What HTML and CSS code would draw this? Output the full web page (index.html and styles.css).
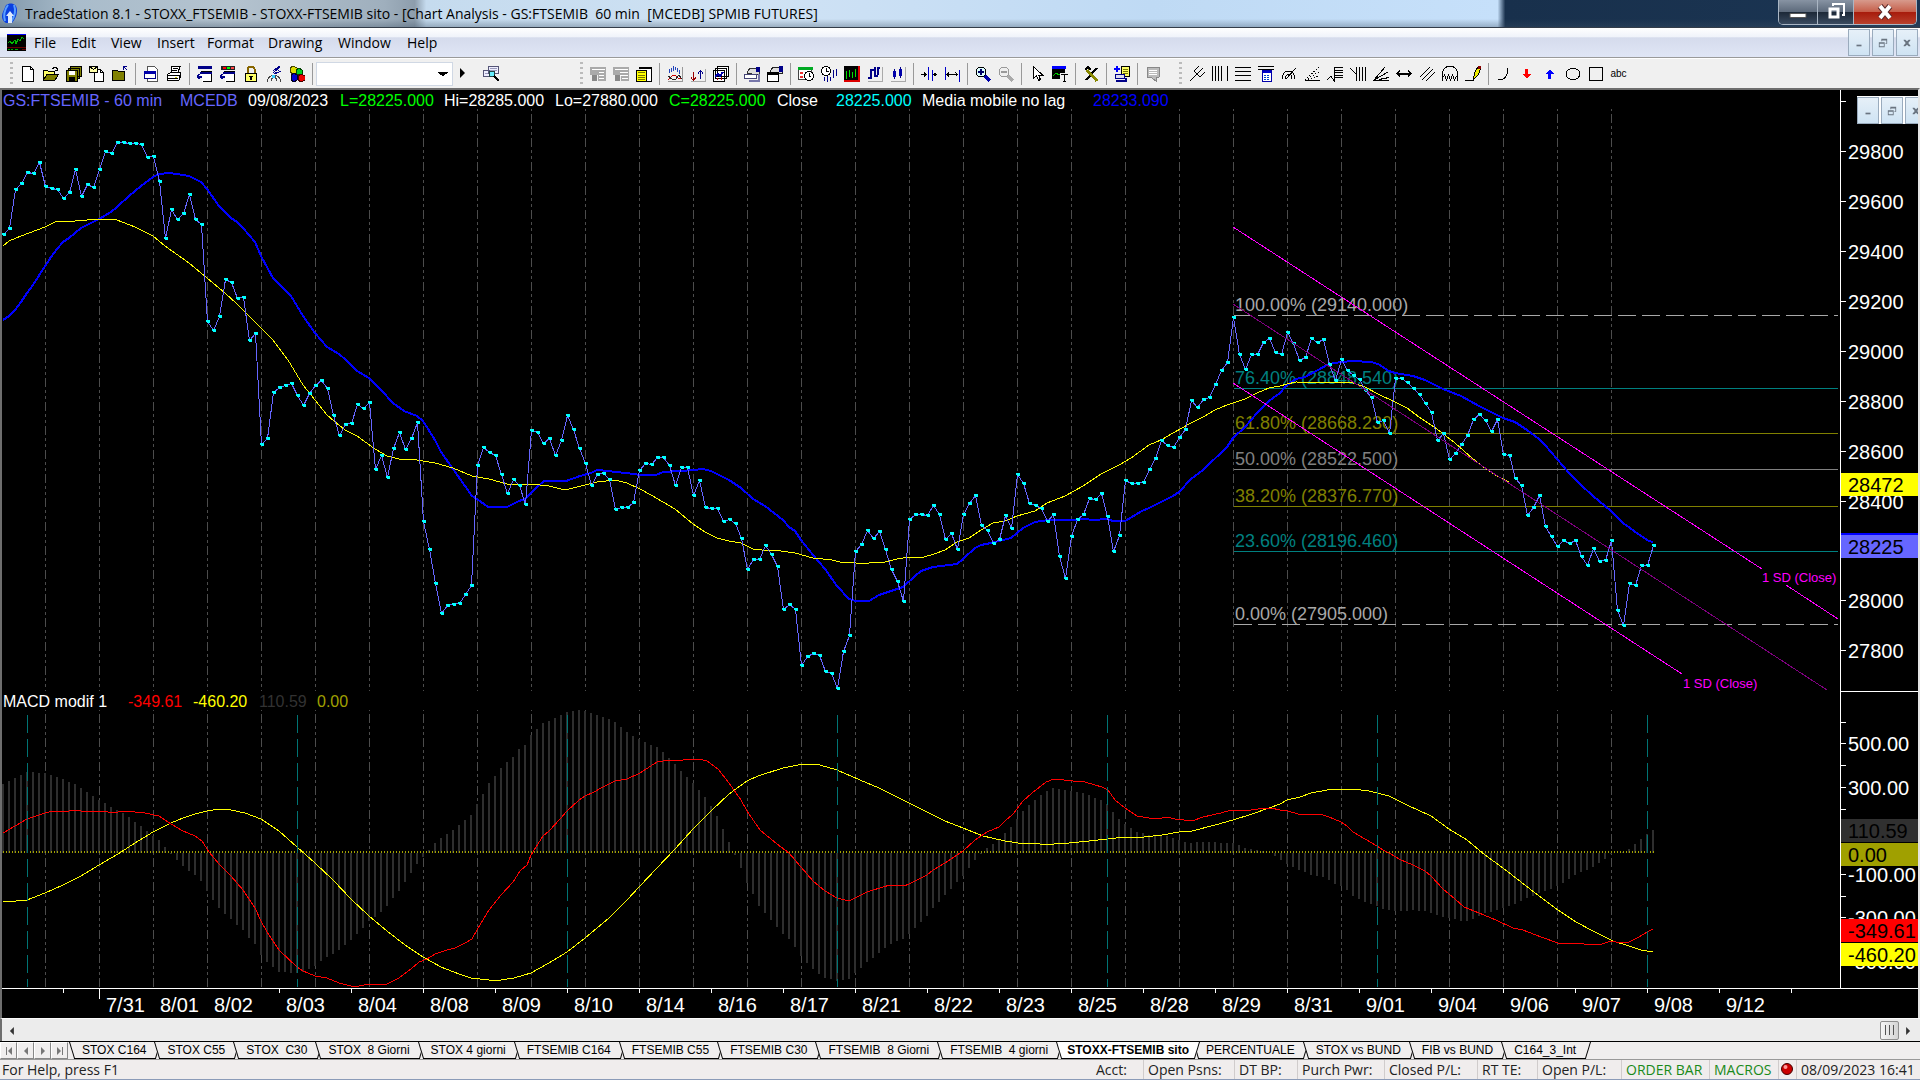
FILE: index.html
```html
<!DOCTYPE html>
<html lang="en">
<head>
<meta charset="utf-8">
<title>TradeStation 8.1 - STOXX_FTSEMIB</title>
<link rel="stylesheet" href="styles.css">
</head>
<body>
<div class="app">
  <header class="titlebar">
    <svg class="logo" viewBox="0 0 18 24"><path d="M5 3C9 0 16 1 16 8c0 6-2 9-5 13H5C1 19 0 14 2 10z" fill="#0a3fe0"/><path d="M7 3c-3 4-5 9-3 16M13 3c2 5 1 11-3 17" stroke="#5aa0ff" stroke-width="2" fill="none"/><path d="M9 9l4 5h-2v7H7v-7H5z" fill="#dbe9ff"/></svg>
    <h1 class="title">TradeStation 8.1 - STOXX_FTSEMIB - STOXX-FTSEMIB sito - [Chart Analysis - GS:FTSEMIB&nbsp; 60 min&nbsp; [MCEDB] SPMIB FUTURES]</h1>
    <div class="wincontrols">
      <button class="win win-min" aria-label="Minimize"><svg width="20" height="20" viewBox="0 0 20 20"><path d="M2 11.500h16v4H2z" fill="#fff" stroke="#555"/></svg></button>
      <button class="win win-max" aria-label="Restore"><svg width="20" height="20" viewBox="0 0 20 20"><path d="M7 4V2h11v11h-2" fill="none" stroke="#fff" stroke-width="2"/><path d="M4 7h8v8H4z" fill="none" stroke="#fff" stroke-width="3"/></svg></button>
      <button class="win win-close" aria-label="Close"><svg width="20" height="20" viewBox="0 0 20 20"><path d="M5 4l10 12M15 4L5 16" stroke="#5a2a2a" stroke-width="6"/><path d="M5 4l10 12M15 4L5 16" stroke="#fff" stroke-width="4"/></svg></button>
    </div>
  </header>

  <nav class="menubar">
    <svg class="docicon" viewBox="0 0 19 17" shape-rendering="crispEdges"><path d="M0 0h19v17H0z" fill="#000"/><path d="M0 0h19v1H0z" fill="#00f"/><path d="M1 9l2-2 2 3 3-4 1 4 2-5 2 2 2-4 2 2" stroke="#0b0" fill="none"/><path d="M0 13.500h19M15 15h4" stroke="#600"/><path d="M1 15.500h2m1 0h2m2 0h3" stroke="#0a0"/></svg>
    <button class="menu m-file">File</button><button class="menu m-edit">Edit</button><button class="menu m-view">View</button><button class="menu m-insert">Insert</button><button class="menu m-format">Format</button><button class="menu m-drawing">Drawing</button><button class="menu m-window">Window</button><button class="menu">Help</button>
    <div class="mdi">
      <button class="mdibtn" aria-label="Minimize chart"><svg viewBox="0 0 12 12"><path d="M3 8h6v2H3z"/></svg></button>
      <button class="mdibtn" aria-label="Restore chart"><svg viewBox="0 0 12 12"><path d="M4 1h7v6H9V6h1V3H5v1H4zM1 5h7v6H1zm1 2v3h5V7z"/></svg></button>
      <button class="mdibtn" aria-label="Close chart"><svg viewBox="0 0 12 12"><path d="M2 2h2l2 2 2-2h2v1L7.500 6 10 9v1H8L6 8l-2 2H2V9l2.500-3L2 3z"/></svg></button>
    </div>
  </nav>

  <div class="toolbar">
    <div class="tools">
      <span class="grip"></span>
      <button class="tool" aria-label="New"><svg viewBox="0 0 16 16"><path d="M2.500.5h8l3 3v12h-11z" fill="#fff" stroke="#000"/><path d="M10.500.5v3h3" fill="none" stroke="#000"/></svg></button>
      <button class="tool" aria-label="Open"><svg viewBox="0 0 16 16"><path d="M.5 13.500v-9h4l1 1h6v3" fill="#ff6" stroke="#000"/><path d="M.5 14l3.500-5.500h11.500L12 14z" fill="#808000" stroke="#000"/><path d="M9.500 3.500l1-2h3l1 2m0-2v3h-3" fill="none" stroke="#000"/></svg></button>
      <button class="tool" aria-label="Save all"><svg viewBox="0 0 16 16"><path d="M4.500.5h11v10h-11zM2.500 2.500h11v10h-11z" fill="#808000" stroke="#000"/><path d="M.5 4.500h11v11H.5z" fill="#808000" stroke="#000"/><path d="M3 5h6v4H3z" fill="#fff"/><path d="M3 11h6v4H3z" fill="#000"/></svg></button>
      <button class="tool" aria-label="New from mail"><svg viewBox="0 0 16 16"><path d="M5.500 3.500h6l3 3v9h-9z" fill="#fff" stroke="#000"/><path d="M.5.5h8v6h-8z" fill="#ffa" stroke="#000"/><path d="M.5.5l4 3 4-3M11.500 3.500v3h3" fill="none" stroke="#000"/></svg></button>
      <button class="tool" aria-label="Close folder"><svg viewBox="0 0 16 16"><path d="M.5 14.500v-10h5l1 1h6v9z" fill="#808000" stroke="#000"/><path d="M11.500 4V.5h3M12 1l3.500 3.500" fill="none" stroke="#008"/></svg></button>
      <span class="sep"></span>
      <button class="tool" aria-label="Page window"><svg viewBox="0 0 16 16"><path d="M4.500.5h7l3 3v12h-10z" fill="#fff" stroke="#555"/><path d="M1.500 5.500h11v7h-11z" fill="#fff" stroke="#008"/><path d="M1 5h12v3H1z" fill="#00a"/></svg></button>
      <button class="tool" aria-label="Print"><svg viewBox="0 0 16 16"><path d="M5 6.500l1-6h8l-2 6M1.500 8.500l3-2h10v5l-2 3h-11z" fill="#fff" stroke="#000"/><path d="M1 9.500h12M7 2.500h5M6 4.500h5M2 12.500h10M13 9v5" stroke="#000"/><path d="M9 11h2v1H9z" fill="#cc0"/></svg></button>
      <span class="sep"></span>
      <button class="tool" aria-label="Previous window"><svg viewBox="0 0 16 16"><path d="M1 0h14v3H1z" fill="#008"/><path d="M3.500 5.500h11v10h-9" fill="#fff" stroke="#000"/><path d="M3 6.500h12" stroke="#008" stroke-width="2"/><path d="M0 10.500h5M2.500 8L0 10.500 2.500 13" fill="none" stroke="#008" stroke-width="2"/></svg></button>
      <button class="tool" aria-label="Next window"><svg viewBox="0 0 16 16"><path d="M1 0h14v4H1z" fill="#222"/><path d="M3 1h3v2H3z" fill="#f00"/><path d="M7 1h3v2H7z" fill="#0f0"/><path d="M11 1h3v2h-3z" fill="#f44"/><path d="M3.500 5.500h11v10h-9" fill="#fff" stroke="#000"/><path d="M3 6.500h12" stroke="#008" stroke-width="2"/><path d="M0 10.500h5M2.500 8L0 10.500 2.500 13" fill="none" stroke="#008" stroke-width="2"/></svg></button>
      <button class="tool" aria-label="Lock"><svg viewBox="0 0 16 16"><path d="M4.500 7V3l2-2.500h3l2 2.500v4" fill="none" stroke="#886600" stroke-width="2"/><path d="M2.500 7.500h11v8h-11z" fill="#ff6" stroke="#000"/><path d="M6 10h4v1H9v3H7v-3H6z" fill="#000"/></svg></button>
      <button class="tool" aria-label="Satellite"><svg viewBox="0 0 16 16"><path d="M7 7l7-6M8 4l6-4M8 8l7-3M7 4l4 4M10 2l4 4" stroke="#008" fill="none"/><path d="M1 15.500c1-4 3-6 7-6s6 2 7 6M5 15l2-5M11 15L9 10" fill="none" stroke="#444"/><path d="M6 9h3v3H6z" fill="#3cf"/></svg></button>
      <button class="tool" aria-label="Cubes"><svg viewBox="0 0 16 16"><path d="M1 2l3-2 4 2v5L4 8 1 6z" fill="#dd0" stroke="#440"/><path d="M7 4l3-2 3 2v4l-3 1-3-1z" fill="#0c2" stroke="#040"/><path d="M2 9l3-2 3 2v5l-3 2-3-2z" fill="#00c" stroke="#002"/><path d="M9 10l3-2 4 2v4l-4 2-3-2z" fill="#e00" stroke="#400"/></svg></button>
      <span class="sep"></span>
      <select class="symbol" aria-label="Symbol"><option></option></select>
      <button class="go" aria-label="Go"><svg viewBox="0 0 6 12"><path d="M1 1l5 5-5 5z"/></svg></button>
      <button class="tool find" aria-label="Find symbol"><svg viewBox="0 0 16 16"><path d="M.5 4.500h6v6h-6zM5.500.5h10v7h-10z" fill="#eef" stroke="#557"/><path d="M7 2.500h7M7 4.500h7M2 7.500h3" stroke="#99b"/><circle cx="9" cy="8" r="3" fill="#6ef" stroke="#244"/><path d="M11 10l5 5" stroke="#000" stroke-width="2"/></svg></button>
    </div>

    <div class="tools tools-chart">
      <span class="grip"></span>
      <button class="tool" aria-label="Account"><svg viewBox="0 0 16 16"><path d="M0 1h16v14h-8V9H0z" fill="#aaa"/><path d="M2 3.500h13M9 6.500h5M9 9.500h5M9 12.500h5" stroke="#fff"/><path d="M2 9h5v6H2z" fill="#888"/></svg></button>
      <button class="tool" aria-label="Positions"><svg viewBox="0 0 16 16"><path d="M0 1h16v14H8V9H0z" fill="#aaa"/><path d="M2 3.500h13M7 6.500h8M7 9.500h8M9 12.500h6" stroke="#fff"/><path d="M2 9h5v6H2z" fill="#888"/></svg></button>
      <button class="tool" aria-label="Data table"><svg viewBox="0 0 16 16"><path d="M3.500 1.500h12v14h-5" fill="#fff" stroke="#000"/><path d="M3 1h13v2H3z"/><path d="M.5 4.500h10v11H.5z" fill="#ff0" stroke="#000"/><path d="M2 6.500h7M2 9h7M2 11.500h7M2 13.500h7" stroke="#770"/></svg></button>
      <span class="sep"></span>
      <button class="tool" aria-label="Indicator"><svg viewBox="0 0 16 16"><path d="M2.500 3v4M4.500 2v4M6.500 0v5M8.500 1v3M10.500 2v4M12.500 4v4" stroke="#24b"/><path d="M1 14l4-4 3-1 3 3 3 1" fill="none" stroke="#c00"/><path d="M1 10l4 3h4l3-4 3 4" fill="none" stroke="#222"/><path d="M15.500 1v14.500H1" fill="none" stroke="#999"/></svg></button>
      <button class="tool" aria-label="Signals"><svg viewBox="0 0 16 16"><path d="M3.500 6v8M1 11.500l2.500 3 2.500-3" fill="none" stroke="#900"/><path d="M10.500 13V5M8 7.500l2.500-3 2.500 3" fill="none" stroke="#008"/><path d="M15.500 3v12.500H1" fill="none" stroke="#aaa"/></svg></button>
      <button class="tool" aria-label="Charts"><svg viewBox="0 0 16 16"><path d="M4.500.5h11v10h-11zM2.500 2.500h11v10h-11zM.5 4.500h11v11H.5z" fill="#fff" stroke="#000"/><path d="M2 11l3-3 2 2 3-4" fill="none" stroke="#00a" stroke-width="2"/><path d="M4.500 14v-2m4 2v-3" stroke="#a00"/></svg></button>
      <span class="sep"></span>
      <button class="tool" aria-label="Format symbol"><svg viewBox="0 0 16 16"><path d="M3 7l3-5h9v6H8z" fill="#ddd" stroke="#333"/><path d="M12 1h4v5h-4z" fill="#008"/><path d="M.5 8.500h12v4H.5z" fill="#fff" stroke="#447"/><path d="M5 14.500h10V8" fill="none" stroke="#77a" stroke-width="2"/></svg></button>
      <button class="tool" aria-label="Format window"><svg viewBox="0 0 16 16"><path d="M3 6l3-5h9v6H8z" fill="#ddd" stroke="#222"/><path d="M12 0h4v6h-4z" fill="#008"/><path d="M.5 6.500h11v9H.5z" fill="#fff" stroke="#000"/><path d="M0 6h12v3H0z"/></svg></button>
      <span class="sep"></span>
      <button class="tool" aria-label="Session"><svg viewBox="0 0 16 16"><path d="M.5 2.500h13v11H.5z" fill="#fff" stroke="#444"/><path d="M0 1h15v3H0z" fill="#0a2"/><path d="M2 6h3v2H2zm0 4h3v2H2z" fill="#e33"/><circle cx="11" cy="10" r="4.500" fill="#fff" stroke="#000"/><path d="M11 7v3h2" fill="none" stroke="#000"/></svg></button>
      <button class="tool" aria-label="Time bars"><svg viewBox="0 0 16 16"><circle cx="5" cy="5" r="4.500" fill="#fff" stroke="#000"/><path d="M5 2v3h3" fill="none" stroke="#000"/><path d="M12.500 4v8M3.500 11v4M6.500 10v6M9.500 11v4M15.500 3v7" stroke="#008"/></svg></button>
      <button class="tool" aria-label="Bars"><svg viewBox="0 0 16 16"><path d="M0 0h16v16H0z"/><path d="M2.500 5v8M5.500 4v7M8.500 6v6M11.500 3v8" stroke="#0d0"/><path d="M15 0v16M0 14.500h16" stroke="#d00" stroke-width="2"/></svg></button>
      <button class="tool" aria-label="Bar style"><svg viewBox="0 0 16 16"><path d="M4 3v10M8 1v10M11 1v8M1 12h3M4 4h4M8 10h3M11 2h2" stroke="#008" stroke-width="2" fill="none"/><path d="M15.500 1v14.500H1" fill="none" stroke="#aaa"/></svg></button>
      <button class="tool" aria-label="Candle style"><svg viewBox="0 0 16 16"><path d="M4.500 3v10M10.500 1v11" stroke="#008"/><path d="M3 5h3v6H3zM9 3h3v7H9z" fill="#00a"/><path d="M15.500 1v14.500H1" fill="none" stroke="#aaa"/></svg></button>
      <span class="sep"></span>
      <button class="tool" aria-label="Decrease spacing"><svg viewBox="0 0 16 16"><path d="M7.500 1v13M11.500 4v11" stroke="#00c"/><path d="M0 8.500h5M3 6.500l2 2-2 2M16 8.500h-3M14.500 7L13 8.500l1.500 1.500" fill="none" stroke="#000"/></svg></button>
      <button class="tool" aria-label="Increase spacing"><svg viewBox="0 0 16 16"><path d="M1.500 1v13M15.500 4v12" stroke="#00c"/><path d="M3 8.500h10M5 6.500l-2 2 2 2M11.500 6.500l2 2-2 2" fill="none" stroke="#000"/></svg></button>
      <span class="sep"></span>
      <button class="tool" aria-label="Zoom in"><svg viewBox="0 0 16 16"><circle cx="6" cy="6" r="5" fill="#dff" stroke="#000"/><path d="M3 6h6M6 3v6" stroke="#006" stroke-width="2"/><path d="M10 10l5 5" stroke="#00a" stroke-width="3"/></svg></button>
      <button class="tool" aria-label="Zoom out"><svg viewBox="0 0 16 16"><circle cx="6" cy="6" r="5" fill="#eee" stroke="#999"/><path d="M3 6h6" stroke="#999" stroke-width="2"/><path d="M10 10l5 5" stroke="#aaa" stroke-width="3"/></svg></button>
      <span class="sep"></span>
      <button class="tool" aria-label="Pointer"><svg viewBox="0 0 16 16"><path d="M4.500.5v12l3-3 2 5 2-1-2-4.500h4z" fill="#fff" stroke="#000"/></svg></button>
      <button class="tool" aria-label="Text on chart"><svg viewBox="0 0 16 16"><path d="M0 1h13v12H0z"/><path d="M0 0h14v3H0z" fill="#00f"/><path d="M1 10l3-3 3 2 3-2" stroke="#0c0" fill="none"/><path d="M8 7h8v9H8z" fill="#f0f0f0"/><path d="M9 8.500h7M12.500 8v8M11 15.500h3" stroke="#000"/></svg></button>
      <span class="sep"></span>
      <button class="tool" aria-label="Tools"><svg viewBox="0 0 16 16"><path d="M3 14L14 2M2 4l3-3 3 3" stroke="#000" stroke-width="2" fill="none"/><path d="M4 4l10 11" stroke="#880" stroke-width="3"/></svg></button>
      <span class="sep"></span>
      <button class="tool" aria-label="Add workspace"><svg viewBox="0 0 16 16"><path d="M7.500.5h8v10h-8z" fill="#ff6" stroke="#000"/><path d="M9 3.500h5M9 5.500h5M9 7.500h5" stroke="#770"/><path d="M3 0v6M0 3h6" stroke="#00f" stroke-width="2"/><path d="M1.500 8.500h9v4h-9z" fill="#dde" stroke="#008"/><path d="M2 15h10v-3" stroke="#008" stroke-width="2" fill="none"/></svg></button>
      <span class="sep"></span>
      <button class="tool" aria-label="Notes"><svg viewBox="0 0 16 16"><path d="M2 1h12v10l-3 1v3l-4-3-5-1z" fill="#bbb" stroke="#888"/><path d="M4 4.500h8M4 6.500h8M4 8.500h8" stroke="#fff"/></svg></button>
    </div>

    <div class="tools tools-draw">
      <span class="grip"></span>
      <button class="tool" aria-label="Pitchfork"><svg viewBox="0 0 16 16"><path d="M1 15l7-7M5 5l6 6M5 5l5-5M11 11l5-5M8 8l6-6" fill="none" stroke="#000"/></svg></button>
      <button class="tool" aria-label="Vertical lines"><svg viewBox="0 0 16 16"><path d="M.5 0v15M3.500 0v15M6.500 0v15M9.500 0v15M15.500 0v15" stroke="#000"/></svg></button>
      <button class="tool" aria-label="Horizontal lines"><svg viewBox="0 0 16 16"><path d="M0 1.500h16M0 5.500h16M0 9.500h16M0 14.500h16" stroke="#000"/></svg></button>
      <button class="tool" aria-label="Calculator lines"><svg viewBox="0 0 16 16"><path d="M0 .5h16M0 3.500h16" stroke="#000"/><path d="M4.500 4.500h9v11h-9z" fill="#fff" stroke="#00a"/><path d="M5 5h8v2H5z" fill="#00c"/><path d="M6 9.500h2m1 0h2M6 11.500h2m1 0h2M6 13.500h2m1 0h2" stroke="#04c"/></svg></button>
      <button class="tool" aria-label="Fibonacci arcs"><svg viewBox="0 0 16 16"><path d="M1 13c0-5 3-8 7-8s5 3 6 8M4 13c0-3 2-5 4-5s3 2 3 5M5 13L15 2" fill="none" stroke="#000"/></svg></button>
      <button class="tool" aria-label="Dotted fan"><svg viewBox="0 0 16 16"><path d="M1 14.500h15" stroke="#000"/><path d="M1 14L15 1M1 14l14-8M1 14l14-4" stroke="#000" stroke-dasharray="1 2"/></svg></button>
      <button class="tool" aria-label="Retracement"><svg viewBox="0 0 16 16"><path d="M0 14l4-4 3 5V1M8 1.500h8M8 4.500h8M8 6.500h8M8 9.500h8M8 11.500h8" fill="none" stroke="#000"/></svg></button>
      <button class="tool" aria-label="Time projection"><svg viewBox="0 0 16 16"><path d="M0 2l6 6M6.500 1v14M9.500 1v14M12.500 1v14M15.500 1v14" fill="none" stroke="#000"/></svg></button>
      <button class="tool" aria-label="Fan"><svg viewBox="0 0 16 16"><path d="M0 14.500h16M1 14L12 1M1 14l14-8M6 13.500l10-2" stroke="#000"/></svg></button>
      <button class="tool" aria-label="Horizontal extend"><svg viewBox="0 0 16 16"><path d="M1 7.500h14M4 4.500l-3 3 3 3M12 4.500l3 3-3 3" fill="none" stroke="#000" stroke-width="2"/></svg></button>
      <button class="tool" aria-label="Parallel lines"><svg viewBox="0 0 16 16"><path d="M1 11L11 1M3 14L14 3M7 15l9-9" stroke="#000"/></svg></button>
      <button class="tool" aria-label="Cycle"><svg viewBox="0 0 16 16"><path d="M.5 15V7c0-9 15-9 15 0v8M.5 12l2-3 2 5 2-5 2 5 2-5 2 5 2-4" fill="none" stroke="#000"/></svg></button>
      <button class="tool" aria-label="Pencil"><svg viewBox="0 0 16 16"><path d="M8 14l2-8 3-5 3 1-3 7z" fill="#ee0" stroke="#000"/><path d="M13 0h3v3h-3z" fill="#800"/><path d="M0 14.500h9" stroke="#000"/></svg></button>
      <span class="sep"></span>
      <button class="tool" aria-label="Arc"><svg viewBox="0 0 16 16"><path d="M2 14c7 0 10-5 10-12" fill="none" stroke="#000"/></svg></button>
      <button class="tool" aria-label="Down arrow"><svg viewBox="0 0 16 16"><path d="M6 3h3v5h3l-4 5-5-5h3z" fill="#f00"/></svg></button>
      <button class="tool" aria-label="Up arrow"><svg viewBox="0 0 16 16"><path d="M6 13h3V8h3L8 3 3 8h3z" fill="#00f"/></svg></button>
      <button class="tool" aria-label="Ellipse"><svg viewBox="0 0 16 16"><ellipse cx="8" cy="8" rx="7" ry="5.500" fill="none" stroke="#000"/></svg></button>
      <button class="tool" aria-label="Rectangle"><svg viewBox="0 0 16 16"><path d="M1.500 1.500h13v13h-13z" fill="none" stroke="#000"/></svg></button>
      <button class="tool abc">abc</button>
    </div>
  </div>

  <main class="chart">
    <div class="legend price-legend">
      <span class="sym">GS:FTSEMIB - 60 min</span><span class="sym">MCEDB</span><span>09/08/2023</span><span class="green">L=28225.000</span><span>Hi=28285.000</span><span>Lo=27880.000</span><span class="green">C=28225.000</span><span>Close</span><span class="cyan">28225.000</span><span>Media mobile no lag</span><span class="blue">28233.090</span>
    </div>
    <svg class="plot" id="price" viewBox="2 109 1838 582" preserveAspectRatio="xMinYMin meet">
      <g class="grid" id="price-grid"></g>
      <g class="crisp">
        <path class="fib-edge" d="M1234 315.500H1838M1234 624.500H1838"/>
        <path class="fib-teal" d="M1234 388.500H1838M1234 551.500H1838"/>
        <path class="fib-olive" d="M1234 433.500H1838M1234 506.500H1838"/>
        <path class="fib-mid" d="M1234 469.500H1838"/>
      </g>
      <g class="fib-text">
        <text class="t-edge" x="1235" y="311">100.00% (29140.000)</text>
        <text class="t-teal" x="1235" y="384">76.40% (28848.540)</text>
        <text class="t-olive" x="1235" y="429">61.80% (28668.230)</text>
        <text class="t-mid" x="1235" y="465">50.00% (28522.500)</text>
        <text class="t-olive" x="1235" y="502">38.20% (28376.770)</text>
        <text class="t-teal" x="1235" y="547">23.60% (28196.460)</text>
        <text class="t-edge" x="1235" y="620">0.00% (27905.000)</text>
      </g>
      <g class="crisp">
        <polyline class="avg" id="avg"/>
        <polyline class="slow" id="slow"/>
        <polyline class="close" id="close"/>
        <path class="dots" id="dots"/>
        <path class="channel" d="M1233 227L1762 569M1786 585L1838 619M1233 383L1682 674"/>
        <path class="channel-mid" d="M1233 304L1827 690"/>
      </g>
      <g class="sd"><text x="1762" y="582">1 SD (Close)</text><text x="1683" y="688">1 SD (Close)</text></g>
    </svg>
    <svg class="axis price-axis" viewBox="1840 90 78 601" preserveAspectRatio="xMinYMin meet">
      <path class="tick" d="M1840.500 90V691M1840 101.500h6M1840 151.500h6M1840 201.500h6M1840 251.500h6M1840 301.500h6M1840 351.500h6M1840 401.500h6M1840 451.500h6M1840 501.500h6M1840 600.500h6M1840 650.500h6"/>
      <g class="scale"><text x="1848" y="159">29800</text><text x="1848" y="209">29600</text><text x="1848" y="259">29400</text><text x="1848" y="309">29200</text><text x="1848" y="359">29000</text><text x="1848" y="409">28800</text><text x="1848" y="459">28600</text><text x="1848" y="509">28400</text><text x="1848" y="608">28000</text><text x="1848" y="658">27800</text></g>
      <path d="M1841 473h77v23h-77z" fill="#ff0"/><path d="M1841 533h77v4h-77z" fill="#00f"/><path d="M1841 535h77v23h-77z" fill="#6666ff"/>
      <g class="flag"><text x="1848" y="492">28472</text><text x="1848" y="554">28225</text></g>
    </svg>
    <div class="legend macd-legend"><span>MACD modif 1</span><span class="red">-349.61</span><span class="yellow">-460.20</span><span class="dim">110.59</span><span class="olive">0.00</span></div>
    <svg class="plot" id="macd" viewBox="2 710 1838 278" preserveAspectRatio="xMinYMin meet">
      <g class="grid" id="macd-grid"></g>
      <g class="crisp">
        <path class="hist" id="hist"/>
        <path class="zero" d="M3 852H1655"/>
        <polyline class="signal" id="signal"/>
        <polyline class="fast" id="fast"/>
        <path class="cycle" id="cycle"/>
      </g>
    </svg>
    <svg class="axis macd-axis" viewBox="1840 691 78 297" preserveAspectRatio="xMinYMin meet">
      <path class="tick" d="M1840.500 691V988M1840 691.500h78M1840 722.500h6M1840 743.500h6M1840 765.500h6M1840 787.500h6M1840 809.500h6M1840 874.500h6M1840 896.500h6M1840 917.500h6"/>
      <g class="scale"><text x="1848" y="751">500.00</text><text x="1848" y="795">300.00</text><text x="1848" y="882">-100.00</text><text x="1848" y="925">-300.00</text><text x="1848" y="969">-500.00</text></g>
      <path d="M1841 819h77v23h-77z" fill="#303030"/><path d="M1841 843h77v23h-77z" fill="#a0a000"/><path d="M1841 919h77v23h-77z" fill="#f00"/><path d="M1841 943h77v23h-77z" fill="#ff0"/>
      <g class="flag"><text x="1848" y="838">110.59</text><text x="1848" y="862">0.00</text><text x="1848" y="938">-349.61</text><text x="1848" y="962">-460.20</text></g>
    </svg>
    <svg class="dates" id="dates" viewBox="2 988 1916 30" preserveAspectRatio="xMinYMin meet">
      <path class="tick" id="date-ticks"/>
      <g class="scale" id="date-labels"></g>
    </svg>
    <div class="mdi mdi-float">
      <button class="mdibtn" aria-label="Minimize window"><svg viewBox="0 0 12 12"><path d="M3 8h6v2H3z"/></svg></button>
      <button class="mdibtn" aria-label="Restore window"><svg viewBox="0 0 12 12"><path d="M4 1h7v6H9V6h1V3H5v1H4zM1 5h7v6H1zm1 2v3h5V7z"/></svg></button>
      <button class="mdibtn" aria-label="Close window"><svg viewBox="0 0 12 12"><path d="M2 2h2l2 2 2-2h2v1L7.500 6 10 9v1H8L6 8l-2 2H2V9l2.500-3L2 3z"/></svg></button>
    </div>
  </main>

  <div class="hscroll">
    <button class="arrow" aria-label="Scroll left"><svg viewBox="0 0 6 10"><path d="M6 0v10L1 5z"/></svg></button>
    <span class="track"></span>
    <button class="thumb" aria-label="Scroll thumb"><svg viewBox="0 0 11 10"><path d="M1.500 0v10M5.500 0v10M9.500 0v10"/></svg></button>
    <button class="arrow" aria-label="Scroll right"><svg viewBox="0 0 6 10"><path d="M0 0v10l5-5z"/></svg></button>
  </div>

  <div class="tabs">
    <button class="nav" aria-label="First"><svg viewBox="0 0 10 8"><path d="M2 0h1v8H2zM8 0v8L4 4z"/></svg></button>
    <button class="nav" aria-label="Previous"><svg viewBox="0 0 10 8"><path d="M7 0v8L3 4z"/></svg></button>
    <button class="nav" aria-label="Next"><svg viewBox="0 0 10 8"><path d="M3 0v8l4-4z"/></svg></button>
    <button class="nav" aria-label="Last"><svg viewBox="0 0 10 8"><path d="M2 0v8l4-4zM7 0h1v8H7z"/></svg></button>
    <button class="tab">STOX C164</button><button class="tab">STOX C55</button><button class="tab">STOX  C30</button><button class="tab">STOX  8 Giorni</button><button class="tab">STOX 4 giorni</button><button class="tab">FTSEMIB C164</button><button class="tab">FTSEMIB C55</button><button class="tab">FTSEMIB C30</button><button class="tab">FTSEMIB  8 Giorni</button><button class="tab">FTSEMIB  4 giorni</button><button class="tab active">STOXX-FTSEMIB sito</button><button class="tab">PERCENTUALE</button><button class="tab">STOX vs BUND</button><button class="tab">FIB vs BUND</button><button class="tab">C164_3_Int</button>
  </div>

  <footer class="status">
    <span class="help">For Help, press F1</span>
    <span class="cell c-acct">Acct:</span><span class="cell c-psns">Open Psns:</span><span class="cell c-dt">DT BP:</span><span class="cell c-purch">Purch Pwr:</span><span class="cell c-closed">Closed P/L:</span><span class="cell c-rt">RT TE:</span><span class="cell c-open">Open P/L:</span><span class="cell c-order">ORDER BAR</span><span class="cell c-macros">MACROS</span><span class="cell c-led"><svg viewBox="0 0 12 12"><circle cx="6" cy="6" r="5.500" fill="#c00" stroke="#400"/><circle cx="4.500" cy="4" r="2" fill="#f99"/></svg></span><span class="cell c-date">08/09/2023 16:41</span>
  </footer>
</div>
<script src="chart.js"></script>
</body>
</html>
```
FILE: styles.css
```css
* { box-sizing: border-box; }
html, body { height: 100%; margin: 0; }
body { font-family: "Liberation Sans", Arial, sans-serif; background: #f0f0f0; overflow: hidden; }
button { margin: 0; padding: 0; border: 0; background: none; font: inherit; color: inherit; }
.app { display: flex; flex-direction: column; height: 100vh; }

/* title bar */
.titlebar {
  flex: none; height: 28px; display: flex; align-items: center; padding-left: 1px;
  border-bottom: 1px solid #333c48;
  background:
    linear-gradient(180deg, rgba(255,255,255,0) 70%, rgba(60,80,100,.35) 100%),
    linear-gradient(90deg, #8299ab 0, #a9bccb 4%, #b4c3cf 12%, #9fafbd 20%, #8d9dac 21.600%, #c5dbee 22.200%, #cfe2f4 40%, #bfdaf4 60%, #c6e0fa 78%, #18304c 78.400%, #1b3553 100%);
}
.logo { width: 18px; height: 24px; margin-right: 6px; }
.title { margin: 0; flex: 1; font: 400 14px "Open Sans", "Noto Sans", sans-serif; color: #000; white-space: pre; }
.wincontrols { display: flex; align-self: flex-start; height: 25px; margin-right: 3px; border: 1px solid #aab6c4; border-top: 0; border-radius: 0 0 5px 5px; overflow: hidden; }
.win { display: flex; align-items: center; justify-content: center; background: linear-gradient(#8793a3 0, #5e6b7c 48%, #1d2938 52%, #3b4b60 100%); border-right: 1px solid #aab6c4; }
.win-min { width: 39px; }
.win-max { width: 36px; }
.win-close { width: 62px; border-right: 0; background: linear-gradient(#d79a8c 0, #c6604c 48%, #a81c0c 52%, #b8402c 100%); }

/* menu bar */
.menubar { flex: none; height: 30px; display: flex; align-items: center; padding-left: 7px; background: linear-gradient(#fff 0, #f0f3fa 30%, #d5dbec 34%, #e0e6f6 100%); border-bottom: 1px solid #9a9a9a; }
.docicon { width: 19px; height: 17px; margin-right: 8px; }
.menu { text-align: left; font: 400 14px "Open Sans", "Noto Sans", sans-serif; }
.m-file { width: 37px; }
.m-edit { width: 40px; }
.m-view { width: 46px; }
.m-insert { width: 50px; }
.m-format { width: 61px; }
.m-drawing { width: 70px; }
.m-window { width: 69px; }
.mdi { display: flex; gap: 2px; margin-left: auto; padding-right: 2px; }
.mdibtn { display: flex; align-items: center; justify-content: center; width: 22px; height: 27px; border: 1px solid #9aabbd; background: linear-gradient(#e6f0f8, #cfe3f3); }
.mdibtn svg { width: 10px; height: 10px; fill: #6a7480; }
.mdi-float { position: absolute; top: 6px; right: -9px; padding: 0; border-top: 1px solid #fff; background: #fff; }

/* tool bar */
.toolbar { flex: none; height: 30px; display: flex; align-items: center; background: #f0f0f0; border-top: 1px solid #fff; }
.tools { display: flex; align-items: center; height: 22px; }
.tools-chart { margin-left: 68px; }
.tools-draw { margin-left: 5px; }
.grip { width: 3px; height: 24px; margin: 0 3px 0 10px; background: repeating-linear-gradient(#bbb 0 2px, #f0f0f0 2px 5px); }
.sep { width: 8px; height: 22px; background: linear-gradient(#999, #999) 4px 0 / 1px 100% no-repeat; }
.tool { width: 23px; height: 22px; display: flex; align-items: center; justify-content: center; }
.tool svg { width: 16px; height: 16px; shape-rendering: crispEdges; }
.symbol { width: 137px; height: 24px; border: 1px solid #d0d8e4; appearance: none; background: linear-gradient(45deg, transparent 50%, #000 50%) 121px 9px / 5px 5px no-repeat, linear-gradient(315deg, transparent 50%, #000 50%) 126px 9px / 5px 5px no-repeat, #fff; }
.go { width: 18px; height: 22px; }
.go svg { width: 6px; height: 12px; }
.find { margin-left: 8px; }
.abc { font-size: 10px; }

/* chart */
.chart {
  position: relative; flex: 1; min-height: 0; overflow: hidden; display: grid;
  grid-template-columns: minmax(0, 1fr) 78px;
  grid-template-rows: 19px minmax(0, 582fr) 19px minmax(0, 278fr) 30px;
  background: #000; border: 2px solid #6e6e6e; border-width: 2px 2px 0; border-right-color: #e4e4e4;
}
.chart > svg { display: block; width: 100%; height: 100%; min-width: 0; min-height: 0; }
.legend { display: grid; align-items: center; color: #fff; font-size: 16px; line-height: 19px; white-space: pre; padding: 1px 0 0 1px; }
.price-legend { grid-area: 1 / 1; grid-template-columns: 177px 68px 92px 104px 111px 114px 108px 59px 86px 171px 1fr; }
.macd-legend { grid-area: 3 / 1; grid-template-columns: 125px 65px 66px 58px 1fr; }
#price { grid-area: 2 / 1; }
#macd { grid-area: 4 / 1; }
.price-axis { grid-area: 1 / 2 / 3 / 3; }
.macd-axis { grid-area: 3 / 2 / 5 / 3; }
.dates { grid-area: 5 / 1 / 6 / 3; }
.sym { color: #6666ff; }
.green { color: #0f0; }
.cyan { color: #0ff; }
.blue { color: #00f; }
.red { color: #f00; }
.yellow { color: #ff0; }
.dim { color: #323232; }
.olive { color: #a0a000; }

.chart text { font-family: "Liberation Sans", Arial, sans-serif; }
.crisp, .grid, .tick { shape-rendering: crispEdges; fill: none; }
.grid path { stroke: #4c4c4c; stroke-dasharray: 9 3 3 3 3 3; }
#price-grid path { stroke-dashoffset: 19px; }
#macd-grid path { stroke-dashoffset: 20px; }
.avg { stroke: #00f; stroke-width: 2px; }
.slow, .signal { stroke: #ff0; }
.close { stroke: #6666ff; }
.dots { fill: #0ff; }
.fast { stroke: #f00; }
.hist { fill: #2e2e2e; }
.zero { stroke: #a0a000; stroke-width: 2px; stroke-dasharray: 1 2; }
.cycle { stroke: #007474; stroke-dasharray: 18 6; }
.channel { stroke: #f0f; }
.channel-mid { stroke: #800080; }
.fib-edge { stroke: #a8a8a8; stroke-dasharray: 18 6; }
.fib-teal { stroke: #008080; }
.fib-olive { stroke: #808000; }
.fib-mid { stroke: #808080; }
.fib-text { font-size: 18px; }
.t-edge { fill: #a8a8a8; }
.t-teal { fill: #008080; }
.t-olive { fill: #808000; }
.t-mid { fill: #808080; }
.sd { font-size: 13px; fill: #f0f; }
.tick { stroke: #fff; }
.scale { font-size: 20px; fill: #fff; }
.flag { font-size: 20px; fill: #000; }

/* scroll bar */
.hscroll { flex: none; height: 23px; display: flex; align-items: center; background: #ececec; border-top: 1px solid #fafafa; border-left: 2px solid #6e6e6e; padding-right: 3px; }
.arrow { width: 18px; height: 20px; }
.arrow svg { width: 5px; height: 8px; fill: #333; }
.track { flex: 1; }
.thumb { width: 19px; height: 19px; border: 1px solid #8f8f8f; border-radius: 2px; background: linear-gradient(90deg, #f6f6f6, #d4d4d4); display: flex; align-items: center; justify-content: center; }
.thumb svg { width: 11px; height: 10px; stroke: #555; }

/* workspace tabs */
.tabs { flex: none; height: 18px; display: flex; background: #f0eeee; border-top: 1px solid #000; isolation: isolate; }
.nav { width: 17px; height: 17px; display: flex; align-items: center; justify-content: center; border: 1px solid; border-color: #fff #888 #888 #fff; }
.nav svg { width: 10px; height: 8px; fill: #777; }
.nav + .tab { margin-left: 1px; }
.tab { position: relative; height: 17px; padding: 0 15px 0 13px; margin-right: -7px; font-size: 12px; line-height: 15px; white-space: pre; isolation: isolate; }
.tab::before, .tab::after { content: ""; position: absolute; z-index: -1; top: 0; bottom: 0; width: 50%; background: #f0eeee; border-bottom: 1px solid #000; }
.tab::before { left: 0; border-left: 1px solid #000; transform: skewX(17deg); transform-origin: 0 0; }
.tab::after { right: 0; border-right: 1px solid #000; transform: skewX(-17deg); transform-origin: 100% 0; }
.active { z-index: 1; padding: 0 11px 0 11px; font-weight: bold; }
.active::before, .active::after { background: #fff; }

/* status bar */
.status { flex: none; height: 21px; display: flex; align-items: center; background: #f0eded; border-top: 1px solid #999; border-bottom: 1px solid #8b9bb8; font: 400 14px/19px "Open Sans", "Noto Sans", sans-serif; color: #222; white-space: nowrap; }
.help { flex: 1; padding-left: 2px; }
.cell { height: 19px; padding-left: 4px; border-left: 1px solid #d0cccc; overflow: hidden; }
.c-acct { width: 52px; border-left-color: transparent; }
.c-psns { width: 91px; }
.c-dt { width: 63px; }
.c-purch { width: 87px; }
.c-closed { width: 93px; }
.c-rt { width: 60px; }
.c-open { width: 84px; }
.c-order { width: 88px; color: #1a8a1a; }
.c-macros { width: 69px; color: #1a8a1a; }
.c-led { width: 18px; padding: 0 0 0 2px; }
.c-led svg { width: 12px; height: 12px; }
.c-date { width: 124px; }
```
FILE: chart.js
```js
// Bars are six pixels apart, starting at the left edge of the plot.
const FIRST = 3.5, STEP = 6;

const close = [
234,228,189,183,172,173,162,186,188,189,198,192,169,196,184,187,169,151,153,142,142,143,143,144,157,156,181,238,209,219,213,194,219,224,321,330,316,279,282,298,297,340,333,
444,438,392,387,385,383,395,405,393,385,380,388,415,435,424,423,404,408,402,469,455,477,448,432,449,438,422,521,549,583,613,605,604,603,594,585,465,447,452,455,474,493,479,485,504,430,432,443,438,455,440,415,429,448,463,485,474,473,479,509,507,507,502,470,
463,464,457,457,465,485,467,467,495,480,507,508,508,521,519,523,538,569,559,559,545,554,566,609,604,609,665,656,653,655,671,673,688,651,635,551,544,530,538,531,549,569,581,601,519,514,514,515,505,514,539,533,549,514,503,495,525,530,543,539,515,528,474,483,503,505,508,521,514,556,578,536,519,514,498,499,493,516,551,535,480,483,483,482,469,458,440,445,447,437,429,400,407,399,397,384,370,362,
317,354,369,354,354,342,338,352,354,332,343,360,357,338,342,339,364,380,359,370,375,379,390,397,422,420,433,378,378,382,388,394,403,412,440,433,459,453,444,435,419,414,420,431,419,454,455,478,485,515,507,495,526,536,546,540,543,540,556,565,548,561,560,540,610,625,583,585,565,565,545];

const avg = "3,320 9,316 15,310 21,302 27,293 33,285 40,274 51,257 57,249 63,242 69,238 81,228 99,219 111,212 117,207 129,196 141,186 153,177 159,174 169,173 177,174 189,176 201,182 207,189 219,206 231,218 237,222 243,228 255,242 261,256 273,278 291,296 303,316 315,333 327,347 339,354 346,360 357,371 369,378 381,390 393,403 404,411 417,416 423,421 435,440 441,452 453,469 465,486 472,496 477,499 488,507 507,507 519,501 525,499 537,487 544,481 566,481 580,476 591,473 597,470 609,471 615,472 627,473 640,475 656,475 663,472 681,471 693,470 703,469 711,471 729,480 741,488 753,499 765,506 783,520 789,527 795,531 801,540 813,555 825,569 837,586 849,599 856,601 869,601 879,595 897,589 903,587 915,576 921,571 933,567 957,564 963,559 975,548 981,545 991,543 1011,538 1023,528 1035,522 1048,520 1071,520 1085,519 1093,520 1107,519 1113,521 1125,521 1142,511 1149,508 1173,496 1179,492 1191,479 1203,470 1227,447 1233,438 1245,427 1257,413 1269,401 1280,393 1287,385 1296,379 1305,377 1318,370 1329,364 1341,362 1353,361 1371,362 1378,364 1389,371 1395,373 1413,376 1425,380 1443,389 1461,396 1479,406 1491,412 1503,418 1515,422 1527,430 1539,439 1545,445 1557,459 1569,473 1581,485 1593,496 1611,511 1623,523 1641,536 1649,541 1653,542";

const slow = "3,246 9,241 21,236 45,227 57,221 75,221 99,219 112,219 117,220 135,227 153,236 165,246 189,263 195,268 201,273 225,293 237,304 255,322 273,340 288,360 303,385 315,400 327,415 334,421 345,430 357,436 375,449 387,456 399,459 417,460 435,463 453,468 472,476 489,479 507,484 531,484 549,486 561,489 569,489 585,485 597,482 606,481 615,480 627,483 640,489 651,495 663,502 675,509 693,524 705,532 717,538 729,541 741,543 753,549 762,550 781,551 795,553 813,558 832,560 840,562 856,563 869,563 885,562 897,559 909,557 924,557 934,554 945,550 957,542 969,538 981,530 993,523 1005,521 1017,516 1035,511 1047,503 1065,496 1083,486 1101,474 1119,465 1131,458 1149,445 1161,440 1173,433 1191,423 1203,417 1215,410 1227,405 1245,399 1257,393 1269,388 1280,386 1287,384 1296,382 1353,383 1365,387 1378,394 1395,402 1407,408 1419,417 1437,429 1455,443 1473,459 1485,468 1497,476 1509,482";

const fast = "3,833 15,826 27,819 45,813 49,812 69,811 75,810 81,811 108,812 118,812 122,811 133,811 135,812 145,813 159,816 171,824 183,831 195,836 202,841 209,852 219,864 231,876 243,890 255,908 261,921 267,932 279,950 297,967 303,971 315,976 327,978 339,983 351,986 359,986 369,984 378,985 387,984 399,978 411,969 419,962 427,959 435,954 447,950 455,948 465,943 472,939 477,930 489,910 501,895 513,882 520,871 527,865 531,855 543,836 549,831 561,818 567,811 579,800 585,796 594,792 603,787 615,781 627,779 640,773 657,762 669,760 683,760 689,759 703,760 707,761 718,769 729,783 741,800 747,811 760,830 777,844 789,853 801,867 813,881 825,891 837,898 849,901 855,898 867,892 883,887 890,885 900,885 904,886 909,884 927,875 933,870 945,863 957,855 963,851 975,840 987,832 999,827 1005,821 1013,814 1023,801 1032,793 1046,782 1054,779 1064,780 1073,781 1085,782 1095,785 1102,787 1108,790 1115,800 1125,808 1137,816 1149,818 1162,818 1167,817 1175,819 1192,821 1203,817 1221,813 1231,810 1238,810 1245,811 1258,809 1271,808 1280,810 1288,811 1298,814 1323,815 1329,817 1341,822 1347,826 1353,832 1377,846 1383,850 1389,853 1401,860 1413,865 1425,871 1431,876 1443,889 1455,899 1464,907 1479,913 1496,920 1513,928 1523,930 1541,937 1558,943 1584,944 1593,945 1602,944 1611,941 1621,943 1629,942 1639,937 1647,932 1653,929";

const signal = "3,902 16,901 27,900 45,893 63,885 81,876 99,865 118,854 135,843 153,832 171,823 183,818 195,814 207,811 220,809 231,810 245,813 261,819 279,831 297,847 315,863 333,880 351,899 369,916 387,931 405,945 423,957 441,967 459,974 471,978 489,980 501,980 514,978 531,973 549,963 567,952 585,938 609,918 627,900 640,886 657,868 675,849 693,829 711,811 729,794 747,781 758,776 783,768 803,764 820,765 837,770 860,780 879,788 903,800 927,812 945,821 963,828 983,836 1005,841 1018,843 1040,844 1054,844 1069,843 1089,841 1107,839 1125,837 1144,837 1162,835 1179,832 1192,831 1215,825 1233,820 1252,814 1269,808 1280,804 1287,800 1300,797 1311,793 1333,789 1353,789 1369,791 1389,796 1407,805 1431,816 1449,829 1467,840 1485,855 1503,868 1521,882 1539,896 1558,910 1576,922 1593,931 1613,941 1629,946 1641,950 1653,952";

const el = id => document.getElementById(id);
const SVG = "http://www.w3.org/2000/svg";

el("avg").setAttribute("points", avg);
el("slow").setAttribute("points", slow);
el("fast").setAttribute("points", fast);
el("signal").setAttribute("points", signal);
el("close").setAttribute("points", close.map((y, i) => `${FIRST + STEP * i},${y + 0.5}`).join(" "));
el("dots").setAttribute("d", close.map((y, i) => {
  const x = 3 + STEP * i;
  return `M${x - 1} ${y - 1}h4v3h-3v-1h-1z`;
}).join(""));

// The histogram is the distance between the fast line and its signal line.
const parse = s => s.split(" ").map(p => p.split(",").map(Number));
function at(points, x) {
  for (let i = 1; i < points.length; i++) {
    const [x0, y0] = points[i - 1], [x1, y1] = points[i];
    if (x <= x1) return y0 + (y1 - y0) * (x - x0) / (x1 - x0);
  }
  return points[points.length - 1][1];
}
const f = parse(fast), s = parse(signal);
let hist = "";
for (let i = 0; i < close.length; i++) {
  const x = 3 + STEP * i;
  const h = Math.round(at(f, x) - at(s, x));
  hist += `M${x - 1} 853h2v${h}h-2z`;
}
el("hist").setAttribute("d", hist);

function gridPath(parent, y0, y1) {
  for (let x = 45.5; x < 1620; x += 54) {
    const p = document.createElementNS(SVG, "path");
    p.setAttribute("d", `M${x} ${y0}V${y1}`);
    el(parent).appendChild(p);
  }
}
gridPath("price-grid", 109, 691);
gridPath("macd-grid", 710, 987);

let cycle = "";
for (let x = 27.5; x < 1660; x += 270) cycle += `M${x} 715V987`;
el("cycle").setAttribute("d", cycle);

let ticks = "M2 988.5H1918M63.5 989v4M99.5 989v10";
for (let x = 279.5; x < 1800; x += 72) ticks += `M${x} 989v4`;
el("date-ticks").setAttribute("d", ticks);

const days = [["7/31", 106], ["8/01", 160], ["8/02", 214]];
["8/03","8/04","8/08","8/09","8/10","8/14","8/16","8/17","8/21","8/22","8/23","8/25","8/28","8/29","8/31","9/01","9/04","9/06","9/07","9/08","9/12"]
  .forEach((d, i) => days.push([d, 286 + 72 * i]));
for (const [label, x] of days) {
  const t = document.createElementNS(SVG, "text");
  t.setAttribute("x", x);
  t.setAttribute("y", 1012);
  t.textContent = label;
  el("date-labels").appendChild(t);
}
```
